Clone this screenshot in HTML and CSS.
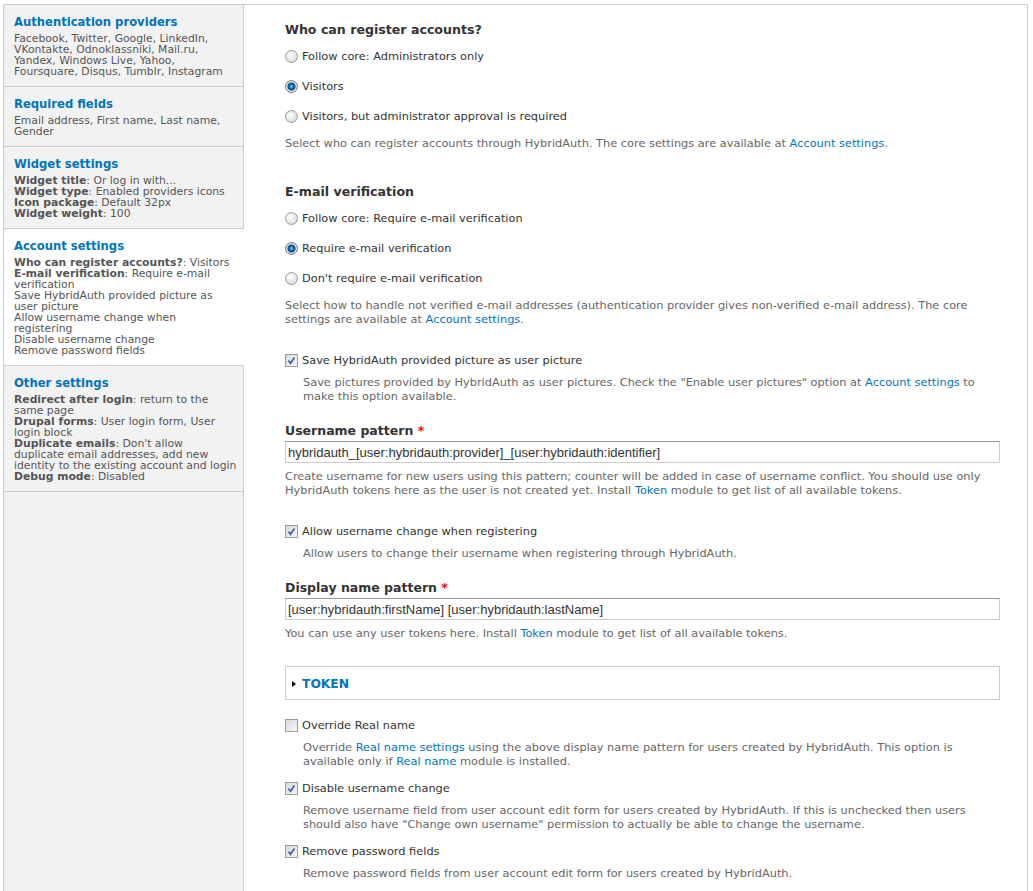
FILE: index.html
```html
<!DOCTYPE html>
<html lang="en">
<head>
    <meta charset="UTF-8">
    <title>HybridAuth settings</title>
    <link rel="stylesheet" href="styles.css">
</head>
<body>
    <div class="vertical-tabs">
        <ul class="tab-list">
            <li class="tab">
                <a class="tab-title" href="#">Authentication providers</a>
                <div class="tab-summary">Facebook, Twitter, Google, LinkedIn, VKontakte, Odnoklassniki, Mail.ru, Yandex, Windows Live, Yahoo, Foursquare, Disqus, Tumblr, Instagram</div>
            </li>
            <li class="tab">
                <a class="tab-title" href="#">Required fields</a>
                <div class="tab-summary">Email address, First name, Last name, Gender</div>
            </li>
            <li class="tab">
                <a class="tab-title" href="#">Widget settings</a>
                <div class="tab-summary"><b>Widget title</b>: Or log in with...<br><b>Widget type</b>: Enabled providers icons<br><b>Icon package</b>: Default 32px<br><b>Widget weight</b>: 100</div>
            </li>
            <li class="tab selected">
                <a class="tab-title" href="#">Account settings</a>
                <div class="tab-summary"><b>Who can register accounts?</b>: Visitors<br><b>E-mail verification</b>: Require e-mail verification<br>Save HybridAuth provided picture as user picture<br>Allow username change when registering<br>Disable username change<br>Remove password fields</div>
            </li>
            <li class="tab">
                <a class="tab-title" href="#">Other settings</a>
                <div class="tab-summary"><b>Redirect after login</b>: return to the same page<br><b>Drupal forms</b>: User login form, User login block<br><b>Duplicate emails</b>: Don't allow duplicate email addresses, add new <span class="nowrap">identity to the existing account and login</span><br><b>Debug mode</b>: Disabled</div>
            </li>
        </ul>

        <div class="tab-pane">
            <div class="form-item first">
                <div class="form-label">Who can register accounts?</div>
                <div class="radios">
                    <label class="option"><span class="radio"></span>Follow core: Administrators only</label>
                    <label class="option"><span class="radio checked"></span>Visitors</label>
                    <label class="option"><span class="radio"></span>Visitors, but administrator approval is required</label>
                </div>
                <div class="description">Select who can register accounts through HybridAuth. The core settings are available at <a href="#">Account settings</a>.</div>
            </div>

            <div class="form-item">
                <div class="form-label">E-mail verification</div>
                <div class="radios">
                    <label class="option"><span class="radio"></span>Follow core: Require e-mail verification</label>
                    <label class="option"><span class="radio checked"></span>Require e-mail verification</label>
                    <label class="option"><span class="radio"></span>Don't require e-mail verification</label>
                </div>
                <div class="description">Select how to handle not verified e-mail addresses (authentication provider gives non-verified e-mail address). The core settings are available at <a href="#">Account settings</a>.</div>
            </div>

            <div class="form-item">
                <label class="option"><span class="checkbox checked"><svg viewBox="0 0 13 13"><path d="M3 6.5 L5.3 9.8 L10 3" /></svg></span>Save HybridAuth provided picture as user picture</label>
                <div class="description indent">Save pictures provided by HybridAuth as user pictures. Check the "Enable user pictures" option at <a href="#">Account settings</a> to make this option available.</div>
            </div>

            <div class="form-item">
                <div class="form-label narrow">Username pattern <span class="required">*</span></div>
                <input class="form-text" type="text" value="hybridauth_[user:hybridauth:provider]_[user:hybridauth:identifier]">
                <div class="description under-input">Create username for new users using this pattern; counter will be added in case of username conflict. You should use only HybridAuth tokens here as the user is not created yet. Install <a href="#">Token</a> module to get list of all available tokens.</div>
            </div>

            <div class="form-item">
                <label class="option"><span class="checkbox checked"><svg viewBox="0 0 13 13"><path d="M3 6.5 L5.3 9.8 L10 3" /></svg></span>Allow username change when registering</label>
                <div class="description indent">Allow users to change their username when registering through HybridAuth.</div>
            </div>

            <div class="form-item">
                <div class="form-label narrow">Display name pattern <span class="required">*</span></div>
                <input class="form-text" type="text" value="[user:hybridauth:firstName] [user:hybridauth:lastName]">
                <div class="description under-input">You can use any user tokens here. Install <a href="#">Token</a> module to get list of all available tokens.</div>
            </div>

            <fieldset class="collapsible">
                <a class="fieldset-title" href="#"><span class="arrow"></span>Token</a>
            </fieldset>

            <div class="checkbox-group">
                <div class="form-item">
                    <label class="option"><span class="checkbox"></span>Override Real name</label>
                    <div class="description indent">Override <a href="#">Real name settings</a> using the above display name pattern for users created by HybridAuth. This option is available only if <a href="#">Real name</a> module is installed.</div>
                </div>
                <div class="form-item">
                    <label class="option"><span class="checkbox checked"><svg viewBox="0 0 13 13"><path d="M3 6.5 L5.3 9.8 L10 3" /></svg></span>Disable username change</label>
                    <div class="description indent">Remove username field from user account edit form for users created by HybridAuth. If this is unchecked then users should also have "Change own username" permission to actually be able to change the username.</div>
                </div>
                <div class="form-item">
                    <label class="option"><span class="checkbox checked"><svg viewBox="0 0 13 13"><path d="M3 6.5 L5.3 9.8 L10 3" /></svg></span>Remove password fields</label>
                    <div class="description indent">Remove password fields from user account edit form for users created by HybridAuth.</div>
                </div>
            </div>
        </div>
    </div>
</body>
</html>
```

FILE: styles.css
```css
body {
    font-family: 'DejaVu Sans', Verdana, sans-serif;
    background-color: #fff;
    color: #333;
    margin: 0;
    padding: 0;
}
a {
    color: #0074bd;
    text-decoration: none;
}
.nowrap {
    white-space: nowrap;
}
.vertical-tabs {
    display: flex;
    margin: 4px 5px 0 3px;
    border-top: 1px solid #ccc;
    min-height: 900px;
}

/* left column with tab summaries */
.tab-list {
    width: 239px;
    flex-shrink: 0;
    margin: 0;
    padding: 0;
    list-style: none;
    background-color: #f2f2f2;
    border-left: 1px solid #ccc;
    border-right: 1px solid #ccc;
}
.tab {
    padding: 9px 10px 9px 10px;
    border-bottom: 1px solid #ccc;
}
.tab.selected {
    background-color: #fff;
    margin-right: -1px;
    padding-right: 11px;
}
.tab-title {
    display: block;
    font-size: 11.6px;
    font-weight: bold;
    line-height: 16px;
}
.tab-summary {
    margin-top: 3px;
    margin-right: -3px;
    font-size: 10.8px;
    line-height: 11px;
    color: #555;
}

/* right column with the form */
.tab-pane {
    flex-grow: 1;
    padding: 17px 27px 20px 41px;
    border-right: 1px solid #ccc;
    font-size: 11.35px;
    line-height: 16px;
}
.form-item {
    margin-bottom: 26px;
}
.form-item.first {
    margin-bottom: 34px;
}
.form-label {
    font-size: 12.6px;
    font-weight: bold;
    line-height: 16px;
    margin-bottom: 10px;
}
.form-label.narrow {
    font-size: 12.5px;
    margin-bottom: 2px;
}
.required {
    color: #f00;
}
.radios .option {
    margin-bottom: 14px;
}
.radios .option:last-child {
    margin-bottom: 12px;
}
.option {
    display: flex;
    align-items: center;
    height: 16px;
    color: #333;
}
.radio {
    width: 11px;
    height: 11px;
    margin-right: 4px;
    border: 1px solid #9a9a9a;
    border-radius: 50%;
    background: radial-gradient(circle at 40% 35%, #fff 0, #eaeaea 45%, #cfcfcf 100%);
}
.radio.checked {
    background: radial-gradient(circle, #7fd0ff 0, #0a76c8 2px, #06457a 3.5px, #dcdcdc 4.5px, #f4f4f4 100%);
    border-color: #7a7a7a;
}
.checkbox {
    width: 11px;
    height: 11px;
    margin-right: 4px;
    border: 1px solid #9c9c9c;
    background: linear-gradient(135deg, #d9d9d9, #f6f6f6);
}
.checkbox svg {
    display: block;
    width: 11px;
    height: 11px;
    fill: none;
    stroke: #3c58b0;
    stroke-width: 1.8;
}
.description {
    font-size: 11.35px;
    line-height: 14px;
    color: #666;
}
.description.indent {
    margin-top: 7px;
    padding-left: 18px;
}
.description.under-input {
    margin-top: 6px;
}
.form-item:has(.indent) {
    margin-bottom: 20px;
}
.form-text {
    display: block;
    box-sizing: border-box;
    width: 100%;
    height: 22px;
    margin: 0;
    padding: 0 2px;
    font-family: 'Liberation Sans', Arial, sans-serif;
    font-size: 13px;
    color: #333;
    border: 1px solid #ccc;
    border-top-color: #999;
}
.collapsible {
    margin: 0 0 17px 0;
    padding: 0 0 0 6px;
    height: 32px;
    border: 1px solid #ccc;
    display: flex;
    align-items: center;
}
.fieldset-title {
    display: flex;
    align-items: center;
    font-size: 12.3px;
    font-weight: bold;
    text-transform: uppercase;
    padding-top: 2px;
}
.arrow {
    width: 0;
    height: 0;
    margin-right: 6px;
    border-top: 3.5px solid transparent;
    border-bottom: 3.5px solid transparent;
    border-left: 4px solid #000;
}
.checkbox-group .form-item {
    margin-bottom: 12px;
}
```
